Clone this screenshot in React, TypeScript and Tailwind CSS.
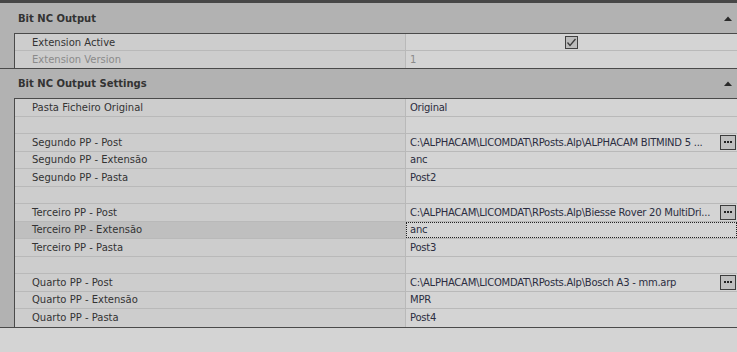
import React from "react";

type Row = {
  name?: string;
  value?: string;
  check?: boolean;
  browse?: boolean;
  disabled?: boolean;
  selected?: boolean;
};

const sections: { title: string; headerH: string; rowH: string; rows: Row[] }[] = [
  {
    title: "Bit NC Output",
    headerH: "h-[30px]",
    rowH: "h-[17px]",
    rows: [
      { name: "Extension Active", check: true },
      { name: "Extension Version", value: "1", disabled: true },
    ],
  },
  {
    title: "Bit NC Output Settings",
    headerH: "h-[29px]",
    rowH: "h-[17.5px]",
    rows: [
      { name: "Pasta Ficheiro Original", value: "Original" },
      {},
      {
        name: "Segundo PP - Post",
        value: "C:\\ALPHACAM\\LICOMDAT\\RPosts.Alp\\ALPHACAM BITMIND 5 ...",
        browse: true,
      },
      { name: "Segundo PP - Extensão", value: "anc" },
      { name: "Segundo PP - Pasta", value: "Post2" },
      {},
      {
        name: "Terceiro PP - Post",
        value: "C:\\ALPHACAM\\LICOMDAT\\RPosts.Alp\\Biesse Rover 20 MultiDri...",
        browse: true,
      },
      { name: "Terceiro PP - Extensão", value: "anc", selected: true },
      { name: "Terceiro PP - Pasta", value: "Post3" },
      {},
      {
        name: "Quarto PP - Post",
        value: "C:\\ALPHACAM\\LICOMDAT\\RPosts.Alp\\Bosch A3 - mm.arp",
        browse: true,
      },
      { name: "Quarto PP - Extensão", value: "MPR" },
      { name: "Quarto PP - Pasta", value: "Post4" },
    ],
  },
];

function CheckBox() {
  return (
    <div className="w-[13px] h-[13px] border border-[#404040] bg-[#bcbcbc] flex items-center justify-center">
      <svg width="11" height="11" viewBox="0 0 11 11">
        <path d="M1.5 5.5 L4 8.5 L9.5 2" fill="none" stroke="#3a3a3a" strokeWidth="1.3" />
      </svg>
    </div>
  );
}

function BrowseButton() {
  return (
    <div className="shrink-0 w-[16px] h-[15px] mr-[1px] border border-[#3c3c3c] bg-[#bfbfbf] flex items-center justify-center gap-[1px]">
      <span className="w-[2px] h-[2px] bg-[#222]" />
      <span className="w-[2px] h-[2px] bg-[#222]" />
      <span className="w-[2px] h-[2px] bg-[#222]" />
    </div>
  );
}

function PropRow({ row, rowH, last }: { row: Row; rowH: string; last: boolean }) {
  return (
    <div className={`flex ${rowH} ${last ? "" : "border-b border-[#b9b9b9]"}`}>
      <div
        className={`w-[391px] shrink-0 border-r border-[#b9b9b9] pl-[17px] flex items-center ${
          row.selected ? "bg-[#bfbfbf]" : "bg-[#cdcdcd]"
        } ${row.disabled ? "text-[#8a8a8a]" : "text-[#333333]"}`}
      >
        {row.name}
      </div>
      <div
        className={`flex-1 min-w-0 bg-[#d4d4d4] flex items-center gap-[2px] tracking-[-0.25px] ${
          row.selected ? "border border-dotted border-[#222]" : ""
        } ${row.check ? "justify-center" : row.selected ? "pl-[3px]" : "pl-[4px]"} ${
          row.disabled ? "text-[#8a8a8a]" : "text-[#2b2d40]"
        }`}
      >
        {row.check ? (
          <CheckBox />
        ) : (
          <>
            <span className="flex-1 min-w-0 whitespace-nowrap overflow-hidden">{row.value}</span>
            {row.browse && <BrowseButton />}
          </>
        )}
      </div>
    </div>
  );
}

export default function App() {
  return (
    <div
      className="w-[737px] h-[352px] bg-[#d4d4d4] text-[10px] overflow-hidden"
      style={{ fontFamily: '"DejaVu Sans", Verdana, sans-serif' }}
    >
      <div className="h-[3px] bg-[#474747]" />
      {sections.map((s) => (
        <div key={s.title} className="border-b border-[#4a4a4a]">
          <div className={`${s.headerH} bg-[#b2b2b2] flex items-center justify-between pl-[18px] pr-[5px]`}>
            <span className="font-bold text-[#333333]">{s.title}</span>
            <svg width="8" height="5" viewBox="0 0 8 5">
              <path d="M0 5 L4 0.5 L8 5 Z" fill="#2a2a2a" />
            </svg>
          </div>
          <div className="flex">
            <div className="w-[14px] shrink-0 bg-[#b2b2b2]" />
            <div className="flex-1 min-w-0 border-l border-t border-[#4a4a4a]">
              {s.rows.map((r, i) => (
                <PropRow key={i} row={r} rowH={s.rowH} last={i === s.rows.length - 1} />
              ))}
            </div>
          </div>
        </div>
      ))}
    </div>
  );
}
